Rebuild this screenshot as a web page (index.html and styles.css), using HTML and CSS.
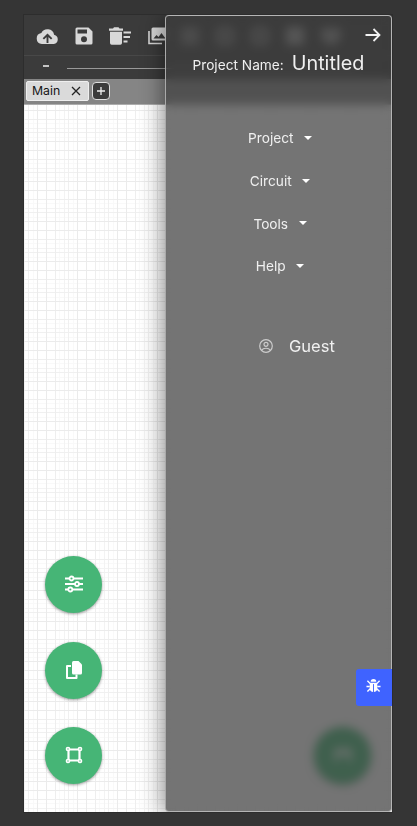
FILE: index.html
```html
<!DOCTYPE html>
<html lang="en">
<head>
<meta charset="utf-8">
<title>Circuit Simulator</title>
<link rel="stylesheet" href="styles.css">
</head>
<body>
<main class="app">
  <header class="toolbar">
    <svg class="t-cloud" viewBox="0 0 24 18"><path d="M19 7.2A7.2 7.2 0 0 0 5.5 5.3 5.9 5.9 0 0 0 6 17h12.7a5 5 0 0 0 .3-9.800z" fill="#d8d8d8"/><path d="M12 16V8M7.600 11.500 12 7.200l4.400 4.300" fill="none" stroke="#3b3b3b" stroke-width="2"/></svg>
    <svg class="t-save" viewBox="0 0 18 18"><path fill="#d8d8d8" fill-rule="evenodd" d="M2 .5h11.500L17.500 4.500V16a1.500 1.500 0 0 1-1.500 1.500H2A1.500 1.500 0 0 1 .5 16V2A1.500 1.500 0 0 1 2 .5zM2.500 2.500v4h9.500v-4zM9 9.200a3 3 0 1 0 0 6 3 3 0 0 0 0-6z"/></svg>
    <svg class="t-trash" viewBox="0 0 22 18"><path fill="#d8d8d8" d="M0 1.500h4L5 .300h4.500l1 1.200H14v2.200H0zM1 4.800h12V16a1.700 1.700 0 0 1-1.700 1.700H2.700A1.700 1.700 0 0 1 1 16zM14.500 4.500H22v2h-7.500zM14.500 9H21v2h-6.500zM14.500 13.500H18.500v2h-4z"/></svg>
    <svg class="t-images" viewBox="0 0 18 18"><path d="M1 4v12.500h13" fill="none" stroke="#d8d8d8" stroke-width="1.600"/><path d="M3.500 2A1.500 1.500 0 0 1 5 .5h13v13H5A1.500 1.500 0 0 1 3.500 12z" fill="#d8d8d8"/><path d="m5.500 11.500 3-3.500 2 2 3-4 4 5.500z" fill="#3b3b3b"/></svg>
    <i class="ghost g1"></i><i class="ghost ring"></i><i class="ghost ring"></i><i class="ghost"></i><i class="ghost heart"></i>
  </header>
  <div class="zoom-row"><span class="minus"></span><span class="track"></span></div>
  <nav class="tabs">
    <div class="tab"><span>Main</span><svg viewBox="0 0 10 10"><path d="m1 1 8 8M9 1 1 9"/></svg></div>
    <button class="add"><svg viewBox="0 0 8 8"><path d="M4 0v8M0 4h8"/></svg></button>
  </nav>
  <section class="canvas">
    <div class="actions">
      <button class="fab"><svg viewBox="0 0 20 20"><path d="M1 4.500h18M1 10h18M1 15.500h18" stroke="#fff" stroke-width="2.200"/><g fill="#46b576" stroke="#fff" stroke-width="1.800"><circle cx="7.500" cy="4.500" r="2"/><circle cx="13" cy="10" r="2"/><circle cx="6.300" cy="15.500" r="2"/></g></svg></button>
      <button class="fab"><svg viewBox="0 0 20 20"><path d="M7 6H3v12h9.500v-3.500" fill="none" stroke="#fff" stroke-width="2" stroke-linejoin="round"/><path d="M9.500 1h5L18 4.500V13a1.500 1.500 0 0 1-1.500 1.500h-7A1.500 1.500 0 0 1 8 13V2.500A1.500 1.500 0 0 1 9.500 1z" fill="#fff"/></svg></button>
      <button class="fab"><svg viewBox="0 0 20 20"><path d="M4.500 4.500h11v11h-11z" fill="none" stroke="#fff" stroke-width="2.200"/><g fill="#46b576" stroke="#fff" stroke-width="1.700"><circle cx="4" cy="4" r="1.500"/><circle cx="16" cy="4" r="1.500"/><circle cx="4" cy="16" r="1.500"/><circle cx="16" cy="16" r="1.500"/></g></svg></button>
    </div>
    <button class="fab"><svg viewBox="0 0 20 20"><path d="M3 17V5h14v12M3 9h14" fill="none" stroke="#fff" stroke-width="2.500"/></svg></button>
  </section>
  <aside class="drawer">
    <svg class="close" viewBox="0 0 16 14"><path d="M.5 7H14M8.500 1 14.500 7l-6 6"/></svg>
    <div class="project"><span class="label">Project Name:</span><span class="name">Untitled</span></div>
    <ul class="menu">
      <li><span>Project</span><i></i></li>
      <li><span>Circuit</span><i></i></li>
      <li><span>Tools</span><i></i></li>
      <li><span>Help</span><i></i></li>
    </ul>
    <div class="user"><svg viewBox="0 0 14 14"><circle cx="7" cy="7" r="6.300"/><circle cx="7" cy="5.300" r="2"/><path d="M2.700 11.200c1.500-2.600 7.100-2.600 8.600 0"/></svg><span>Guest</span></div>
  </aside>
  <button class="report"><svg viewBox="0 0 16 16"><path d="M5 4a3 3 0 0 1 6 0z" fill="#fff"/><path d="M4 5h8v6a4 4 0 0 1-8 0z" fill="#fff"/><path d="m1.500 3 3 3M14.500 3l-3 3M.5 9H4M12 9h3.500M1.500 14.500l3-3M14.500 14.500l-3-3" stroke="#fff" stroke-width="1.500"/><path d="M8 6.500V15" stroke="#3f63ff"/></svg></button>
</main>
</body>
</html>
```
FILE: styles.css
```css
* { box-sizing: border-box; }
body { margin: 0; height: 826px; padding: 15px 25px 14px 24px; background: #353535; font-family: Inter, "Liberation Sans", sans-serif; overflow: hidden; }
button { border: 0; padding: 0; }
svg { display: block; flex: none; }
.app { position: relative; width: 368px; height: 797px; display: flex; flex-direction: column; overflow: hidden; box-shadow: 0 0 0 1px #2d2d2d; background: #3b3b3b; }
.toolbar { flex: none; height: 40px; display: flex; align-items: center; padding: 2px 0 0 11.500px; }
.t-cloud { width: 23px; height: 17px; }
.t-save { width: 18px; height: 18px; margin-left: 16.500px; }
.t-trash { width: 22px; height: 18px; margin-left: 16px; }
.t-images { width: 18px; height: 18px; margin-left: 17px; }
.ghost { flex: none; width: 18px; height: 18px; margin-left: 17px; background: #929292; }
.ghost.g1 { margin-left: 15px; background: #6f6f6f; }
.ghost.ring { background: none; border: 5px solid #808080; border-radius: 7px; }
.ghost.heart { width: 20px; height: 17px; background: #858585; border-radius: 4px 4px 10px 10px; }
.zoom-row { flex: none; height: 24px; border-top: 1px solid #484848; display: flex; padding-left: 19px; }
.minus { width: 6px; height: 2px; margin-top: 9px; background: #c4c4c4; }
.track { height: 1px; width: 290px; margin: 12px 0 0 18px; background: #999; }
.tabs { flex: none; height: 26px; background: #858585; border-bottom: 1px solid #adadad; display: flex; align-items: center; gap: 3px; padding-left: 2px; padding-bottom: 2px; }
.tab { width: 63px; height: 20px; display: flex; align-items: center; padding-left: 5px; background: #dadada; border: 1px solid #efefef; border-radius: 2px; color: #161616; font-size: 12.300px; }
.tab span { width: 38.500px; }
.tab svg { width: 10px; height: 10px; }
.tab path { fill: none; stroke: #222; stroke-width: 1.300; }
.add { width: 18px; height: 18px; margin-left: -.5px; display: grid; place-items: center; background: #3b3b3b; border: 1px solid #dedede; border-radius: 4px; }
.add svg { width: 8px; height: 8px; }
.add path { stroke: #eee; stroke-width: 1.300; }
.canvas {
  --grid: #ebebeb 0 1px, transparent 1px 9px, #ebebeb 9px 10px, transparent 10px 18px, #eeeeee 18px 19px, transparent 19px 22px, #f9f9f9 22px 23px, transparent 23px 27px, #f3f3f3 27px 28px, transparent 28px 31px, #f0f0f0 31px 32px, transparent 32px 36px, #f9f9f9 36px 37px, transparent 37px 40px;
  flex: 1; display: flex; justify-content: space-between; align-items: flex-end; padding: 0 21px 28px;
  background: linear-gradient(to right, var(--grid)) 13px 0 / 40px 100%, linear-gradient(to bottom, var(--grid)) 0 36px / 100% 40px, #fff;
  background-blend-mode: darken;
}
.actions { display: flex; flex-direction: column; gap: 28.500px; }
.fab { width: 57px; height: 57px; display: grid; place-items: center; border-radius: 50%; background: #46b576; box-shadow: 0 1px 3px #0006; }
.fab svg { width: 20px; height: 20px; margin: -1px 0 0; }
.drawer { position: absolute; top: 0; right: 0; width: 227px; height: 797px; border: 1px solid #b5b5b5; border-left: 1.500px solid #aaa; border-radius: 4px; background: rgba(61,61,61,.71); backdrop-filter: blur(5px); box-shadow: -2px 2px 22px #0007; color: #f0f0f0; display: flex; flex-direction: column; }
.close { width: 16px; height: 14px; margin: 12px 10.500px 0 auto; }
.close path { fill: none; stroke: #f2f2f2; stroke-width: 1.800; }
.project { display: flex; align-items: baseline; gap: 8px; margin: 9px 0 0 26.500px; height: 25px; white-space: nowrap; }
.label { font-size: 13.700px; }
.name { font-size: 19.800px; }
.menu { list-style: none; margin: 41px 0 0; padding: 0 0 0 3px; }
.menu li { height: 42.700px; display: flex; align-items: center; justify-content: center; gap: 10.500px; font-size: 13.700px; }
.menu i { border: 4px solid transparent; border-top-color: #fff; border-bottom: 0; margin-top: -1px; }
.user { margin: 48px 0 0 93px; display: flex; align-items: center; gap: 16px; font-size: 16.500px; }
.user svg { width: 14px; height: 14px; }
.user circle, .user path { fill: none; stroke: #ccc; stroke-width: 1.200; }
.report { position: absolute; right: 0; top: 654px; width: 36px; height: 37px; display: grid; place-items: center; border-radius: 3px 0 0 3px; background: #3f63ff; }
.report svg { width: 15px; height: 15px; margin: 0 2px 4px 0; }
```
